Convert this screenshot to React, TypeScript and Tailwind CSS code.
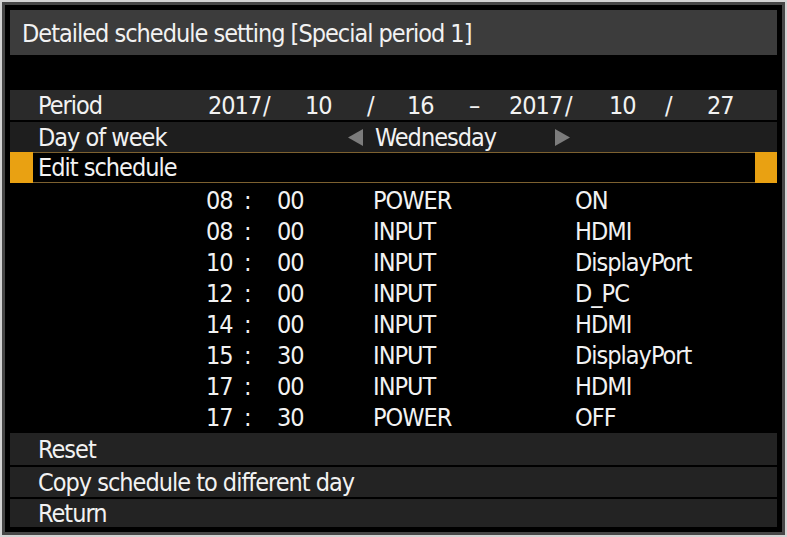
const rows = [
  { h: '08', m: '00', action: 'POWER', value: 'ON' },
  { h: '08', m: '00', action: 'INPUT', value: 'HDMI' },
  { h: '10', m: '00', action: 'INPUT', value: 'DisplayPort' },
  { h: '12', m: '00', action: 'INPUT', value: 'D_PC' },
  { h: '14', m: '00', action: 'INPUT', value: 'HDMI' },
  { h: '15', m: '30', action: 'INPUT', value: 'DisplayPort' },
  { h: '17', m: '00', action: 'INPUT', value: 'HDMI' },
  { h: '17', m: '30', action: 'POWER', value: 'OFF' },
]

function Arrow({ dir }: { dir: 'left' | 'right' }) {
  return (
    <svg width="15" height="17" viewBox="0 0 15 17" className="shrink-0">
      <polygon points={dir === 'left' ? '15,0 15,17 0,8.5' : '0,0 0,17 15,8.5'} fill="#7c7c7c" />
    </svg>
  )
}

export default function App() {
  return (
    <div className="h-[537px] w-[787px] bg-[#d4d4d4] p-[2px] font-['Liberation_Sans_Narrow','DejaVu_Sans_Condensed',Roboto,sans-serif] text-[25px] leading-none tracking-[-1px] text-[#f2f2f2]">
      <div className="flex h-full flex-col border-[3px] border-[#474747] bg-black p-[5px]">
        <div className="flex h-[45px] items-center bg-[#3c3c3c] pl-[12px] pt-[2px]">
          Detailed schedule setting [Special period 1]
        </div>
        <div className="h-[35px]" />

        {/* period */}
        <div className="flex h-[30px] items-center bg-[#2a2a2a] pl-[28px] whitespace-nowrap">
          <span className="w-[170px]">Period</span>
          <span className="w-[55px]">2017</span>
          <span className="w-[42px]">/</span>
          <span className="w-[62px]">10</span>
          <span className="w-[40px]">/</span>
          <span className="w-[62px]">16</span>
          <span className="w-[40px]">–</span>
          <span className="w-[56px]">2017</span>
          <span className="w-[44px]">/</span>
          <span className="w-[56px]">10</span>
          <span className="w-[42px]">/</span>
          <span>27</span>
        </div>

        {/* day of week */}
        <div className="mt-[2px] flex h-[30px] items-center bg-[#1e1e1e] pl-[28px] whitespace-nowrap">
          <span className="w-[310px]">Day of week</span>
          <Arrow dir="left" />
          <span className="ml-[12px] w-[180px]">Wednesday</span>
          <Arrow dir="right" />
        </div>

        {/* selected row */}
        <div className="flex h-[31px] items-stretch">
          <div className="w-[23px] bg-[#e9a112]" />
          <div className="flex flex-1 items-center border-y border-[#7d6130] bg-black pl-[5px]">Edit schedule</div>
          <div className="w-[22px] bg-[#e9a112]" />
        </div>

        <div className="mt-[2px] flex flex-col">
          {rows.map((r, i) => (
            <div key={i} className="flex h-[31px] items-center pl-[196px] whitespace-nowrap">
              <span className="w-[38px]">{r.h}</span>
              <span className="w-[33px]">:</span>
              <span className="w-[96px]">{r.m}</span>
              <span className="w-[202px]">{r.action}</span>
              <span>{r.value}</span>
            </div>
          ))}
        </div>

        <div className="flex h-[32px] items-center bg-[#232323] pl-[28px]">Reset</div>
        <div className="mt-[2px] flex h-[30px] items-center bg-[#232323] pl-[28px]">Copy schedule to different day</div>
        <div className="mt-[2px] flex h-[28px] items-center bg-[#232323] pl-[28px]">Return</div>
      </div>
    </div>
  )
}
